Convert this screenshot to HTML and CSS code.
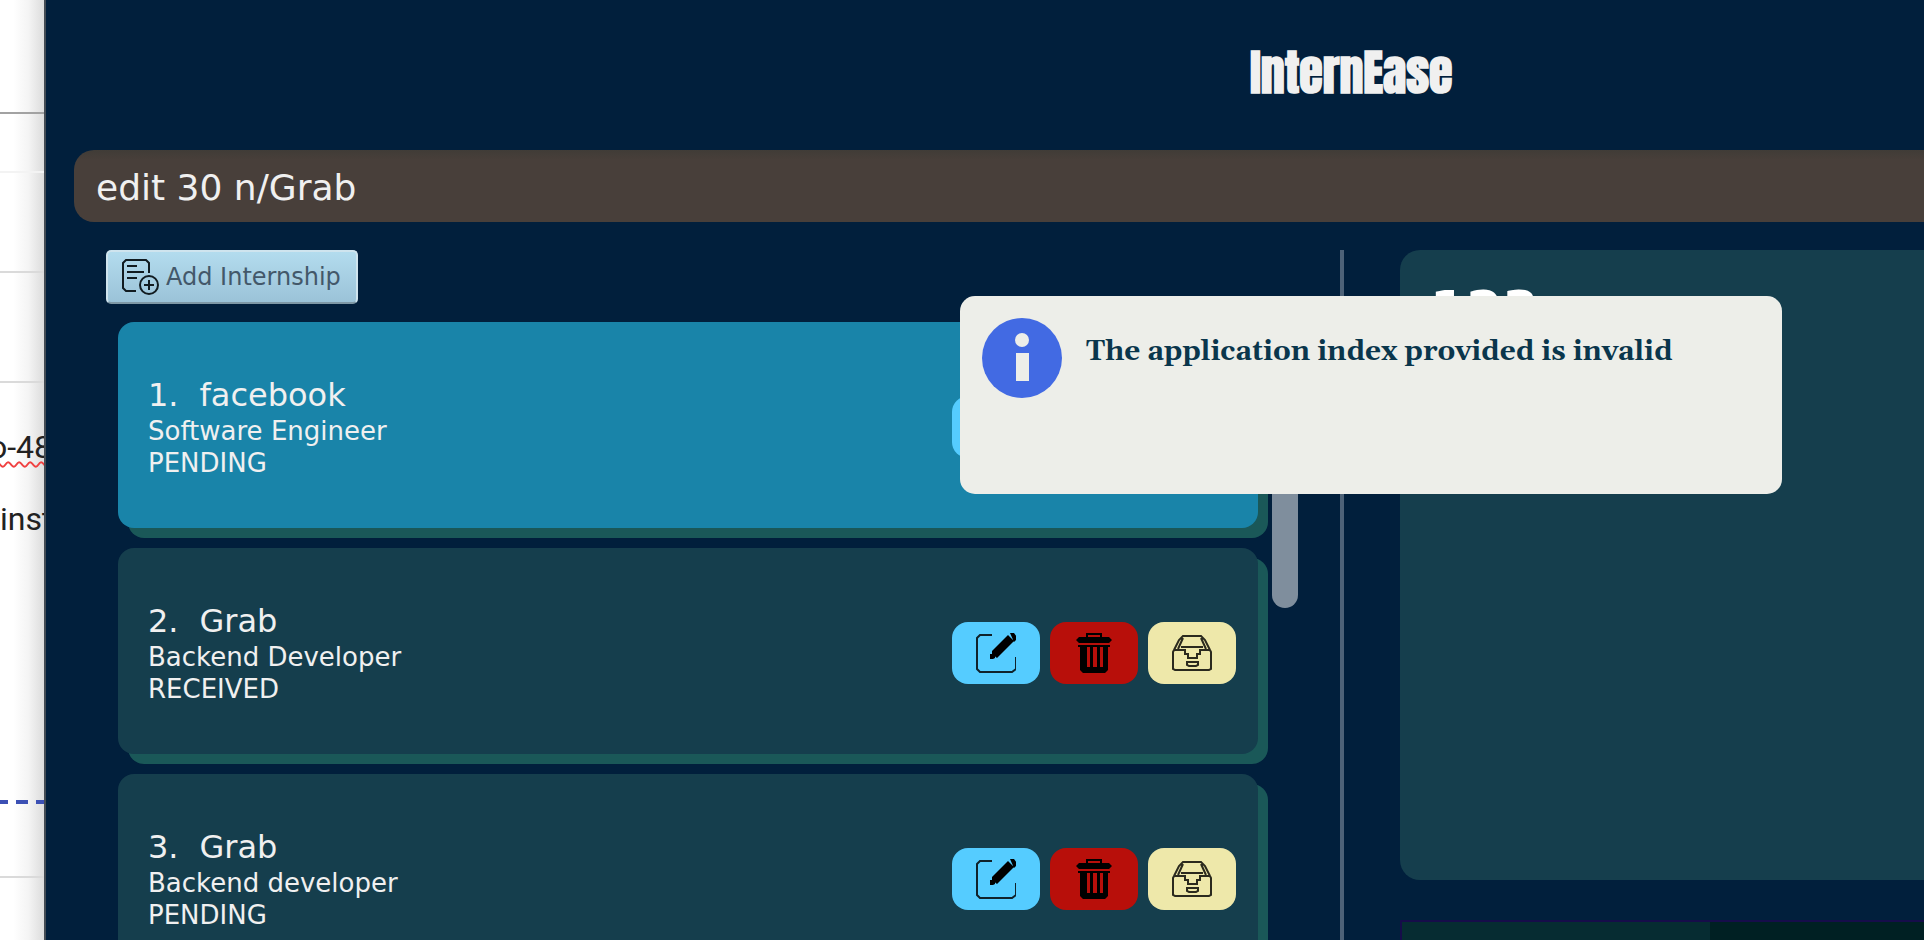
FILE: index.html
```html
<!DOCTYPE html>
<html lang="en">
<head>
<meta charset="utf-8">
<title>InternEase</title>
<link rel="stylesheet" href="styles.css">
</head>
<body>
<svg class="sprite" aria-hidden="true">
  <symbol id="edit" viewBox="0 0 40 40">
    <path d="M16 2H4L1 5v31l3 3h32l4-3V24" fill="none" stroke="#10222b" stroke-width="2"/>
    <path d="M16 18L32 2l6 6-17 17-5-4zM34 0h4l3 4v2l-3 3zM14 21h3l2 2v2l-2 1h-3z" fill="#000"/>
  </symbol>
  <symbol id="trash" viewBox="-2 0 40 40">
    <path d="M11 5V1h14v4" fill="none" stroke="#000" stroke-width="2"/>
    <path d="M0 7l3-3h30l3 3-3 3H3zM2 12h32v2H2z" fill="#000"/>
    <path fill-rule="evenodd" d="M4 13h28v24l-3 3H7l-3-3zM11 14v20h3V14zM17 14v20h4V14zM24 14v20h3V14z" fill="#000"/>
  </symbol>
  <symbol id="archive" viewBox="0 0 40 40">
    <path d="M1 17l1-2h11v4h3v4h9v-4h3v-4h10l1 2v17l-2 1H3l-2-1zM2 15L7 5l4-4h18l4 4 5 10M6 14L11 3M34 14L29 3M9 12h22M15 27h11v3l-2 1h-7l-2-1z" fill="none" stroke="#2b2a1e" stroke-width="2" transform="translate(0 2)"/>
  </symbol>
</svg>

<aside class="backdrop" aria-hidden="true">
  <div class="rule rule-dark"></div>
  <div class="rule rule-faint"></div>
  <div class="rule rule-mid"></div>
  <div class="rule rule-low"></div>
  <p class="snippet"><span class="typo">o-48</span></p>
  <p class="snippet snippet-next">inst</p>
  <div class="dashes"></div>
  <div class="rule rule-last"></div>
</aside>

<main class="window">
  <header class="header"><h1 class="brand">InternEase</h1></header>
  <input class="command" type="text" aria-label="Command" value="edit 30 n/Grab">
  <div class="panes">
    <section class="left">
      <button class="add" type="button">
        <svg class="add-icon" viewBox="0 0 38 38" aria-hidden="true">
          <path d="M15 33H5l-3-3V5l3-3h20l3 3v10M6 8h10M6 14h17M6 20h10" fill="none" stroke="#111b20" stroke-width="2"/>
          <circle cx="28" cy="27" r="9" fill="none" stroke="#111b20" stroke-width="2"/>
          <path d="M28 22v10M23 27h10" stroke="#111b20" stroke-width="2"/>
        </svg>
        Add Internship
      </button>
      <div class="list-area">
        <ul class="list">
          <li class="card selected">
            <div class="info">
              <h2 class="name"><span>1.</span><span>facebook</span></h2>
              <p class="line">Software Engineer</p>
              <p class="line">PENDING</p>
            </div>
            <div class="actions">
              <button class="act edit" type="button" aria-label="Edit"><svg class="icon"><use href="#edit"/></svg></button>
              <button class="act delete" type="button" aria-label="Delete"><svg class="icon"><use href="#trash"/></svg></button>
              <button class="act archive" type="button" aria-label="Archive"><svg class="icon"><use href="#archive"/></svg></button>
            </div>
          </li>
          <li class="card">
            <div class="info">
              <h2 class="name"><span>2.</span><span>Grab</span></h2>
              <p class="line">Backend Developer</p>
              <p class="line">RECEIVED</p>
            </div>
            <div class="actions">
              <button class="act edit" type="button" aria-label="Edit"><svg class="icon"><use href="#edit"/></svg></button>
              <button class="act delete" type="button" aria-label="Delete"><svg class="icon"><use href="#trash"/></svg></button>
              <button class="act archive" type="button" aria-label="Archive"><svg class="icon"><use href="#archive"/></svg></button>
            </div>
          </li>
          <li class="card">
            <div class="info">
              <h2 class="name"><span>3.</span><span>Grab</span></h2>
              <p class="line">Backend developer</p>
              <p class="line">PENDING</p>
            </div>
            <div class="actions">
              <button class="act edit" type="button" aria-label="Edit"><svg class="icon"><use href="#edit"/></svg></button>
              <button class="act delete" type="button" aria-label="Delete"><svg class="icon"><use href="#trash"/></svg></button>
              <button class="act archive" type="button" aria-label="Archive"><svg class="icon"><use href="#archive"/></svg></button>
            </div>
          </li>
        </ul>
        <div class="thumb"></div>
      </div>
    </section>
    <div class="divider"></div>
    <section class="right">
      <article class="detail"><h2 class="detail-title">123</h2></article>
      <div class="grid-pane"><div class="grid-head"></div></div>
    </section>
  </div>
</main>

<div class="toast" role="alert">
  <svg class="toast-icon" viewBox="0 0 80 80" aria-hidden="true">
    <circle cx="40" cy="40" r="40" fill="#426ae3"/>
    <circle cx="40" cy="22" r="7" fill="#edeee9"/>
    <path d="M34 35h13v28H34z" fill="#edeee9"/>
  </svg>
  <p class="toast-text">The application index provided is invalid</p>
</div>
</body>
</html>
```
FILE: styles.css
```css
* { box-sizing: border-box; }
h1, h2, p, ul { margin: 0; padding: 0; font-weight: 400; }
body {
  margin: 0;
  height: 100vh;
  overflow: hidden;
  display: flex;
  background: #fff;
  font-family: "DejaVu Sans", sans-serif;
}
.sprite { position: absolute; width: 0; height: 0; }

.backdrop {
  flex: 0 0 46px;
  overflow: hidden;
  display: flex;
  flex-direction: column;
  background: linear-gradient(90deg, #fff 30%, #f4f4f4 65%, #dcdcdc);
  border-right: 2px solid #444c54;
}
.rule { flex: none; height: 2px; background: #dadada; }
.rule-dark { margin-top: 112px; background: #a2a2a2; }
.rule-faint { margin-top: 57px; background: #f3f3f3; }
.rule-mid { margin-top: 98px; }
.rule-low { margin-top: 108px; }
.rule-last { margin-top: 72px; }
.snippet {
  margin-top: 44px;
  align-self: flex-start;
  font: 32px/40px Roboto, sans-serif;
  color: #222;
  white-space: nowrap;
}
.snippet .typo {
  margin-left: -11px;
  text-decoration: underline wavy #f04040 2px;
  text-underline-offset: 3px;
}
.snippet-next { margin-top: 32px; }
.dashes {
  flex: none;
  height: 4px;
  margin-top: 261px;
  background: repeating-linear-gradient(90deg, #3c50b4 0 8px, transparent 8px 16px, #3c50b4 16px 20px);
}

.window {
  flex: 1;
  min-width: 0;
  overflow: hidden;
  display: flex;
  flex-direction: column;
  background: #011f3c;
  color: #f0f0f0;
}
.header {
  flex: none;
  width: 139%;
  padding: 41px 0 45px;
  text-align: center;
}
.brand {
  font: bold 48px/64px Anton, Impact, "Liberation Sans Narrow", sans-serif;
}
.command {
  flex: none;
  width: 100%;
  height: 72px;
  margin-left: 28px;
  padding: 2px 22px 0;
  border: 0;
  border-radius: 20px;
  background: linear-gradient(#403c37, #483f3a 10px);
  color: #f0f0f0;
  font: 36px "DejaVu Sans", sans-serif;
}
.panes {
  flex: 1;
  min-height: 0;
  margin-top: 28px;
  display: grid;
  grid-template-columns: 1294fr 4px 580fr;
}
.left {
  min-height: 0;
  padding: 0 42px 0 60px;
  display: flex;
  flex-direction: column;
  align-items: flex-start;
}
.add {
  flex: none;
  height: 54px;
  padding: 0 15px 0 13px;
  display: flex;
  align-items: center;
  gap: 7px;
  border: 2px solid #cfe4ee;
  border-bottom-color: #7e98a6;
  border-radius: 5px;
  background: linear-gradient(#b3dcee, #9bc3d8);
  color: #43586a;
  font: 24px "DejaVu Sans", sans-serif;
}
.add-icon { width: 38px; height: 38px; }
.list-area {
  width: 100%;
  padding: 18px 0 0 12px;
  display: flex;
  gap: 14px;
}
.list {
  flex: 1;
  list-style: none;
  display: grid;
  gap: 20px;
}
.card {
  height: 206px;
  padding: 53px 22px 0 30px;
  display: flex;
  justify-content: space-between;
  align-items: flex-start;
  border-radius: 16px;
  background: #153e4d;
  box-shadow: 10px 10px 0 #1a5858;
}
.selected { background: #1984a9; }
.name {
  display: flex;
  gap: 21px;
  font-size: 32px;
  line-height: 40px;
}
.line { font-size: 26px; line-height: 32px; }
.actions { display: flex; gap: 10px; padding-top: 21px; }
.act {
  width: 88px;
  height: 62px;
  padding: 0;
  border: 0;
  border-radius: 16px;
  display: grid;
  place-items: center;
}
.edit { background: #55ccff; }
.delete { background: #b80f0a; }
.archive { background: #eee8aa; }
.icon { width: 40px; height: 40px; overflow: visible; }
.thumb {
  width: 26px;
  height: 286px;
  border-radius: 13px;
  background: #7f8e9d;
}
.divider { background: #4d6278; }
.right {
  padding-left: 56px;
  display: flex;
  flex-direction: column;
  gap: 40px;
}
.detail {
  flex: none;
  height: 630px;
  padding: 30px;
  border-radius: 20px 0 0 20px;
  background: #153e4d;
}
.detail-title {
  color: #fff;
  font-size: 52px;
  font-weight: 700;
  line-height: 60px;
}
.grid-pane {
  flex: 1;
  border: solid #160d4a;
  border-width: 2px 0 0 2px;
  background: #002023;
}
.grid-head { width: 59%; height: 100%; background: #062c32; }

.toast {
  position: absolute;
  left: 960px;
  top: 296px;
  width: 822px;
  height: 198px;
  padding: 22px;
  display: flex;
  gap: 24px;
  border-radius: 15px;
  background: #edeee9;
}
.toast-icon { flex: none; width: 80px; height: 80px; }
.toast-text {
  padding-top: 14px;
  color: #0a364c;
  font: bold 28px/40px Gelasio, Georgia, "Liberation Serif", serif;
  white-space: nowrap;
}
```
